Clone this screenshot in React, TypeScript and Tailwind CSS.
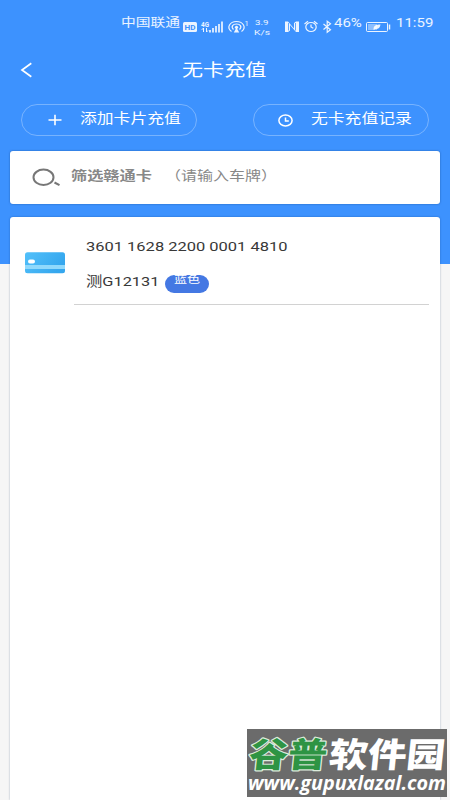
import React from "react";

const cards = [{ no: "3601 1628 2200 0001 4810", plate: "测G12131", color: "蓝色" }];

type WideProps = { box: string; className: string; children: React.ReactNode };

// 横向拉宽的文字，box 是实际占用的宽度
const Wide = ({ box, className, children }: WideProps) => (
  <span className={`block shrink-0 whitespace-nowrap ${box}`}>
    <span className={`inline-block origin-left align-top ${className}`}>{children}</span>
  </span>
);

const StatusBar = () => (
  <div className="flex h-[54px] items-center pl-[121px] text-white/90">
    <Wide box="w-[62px]" className="scale-x-[1.23] text-[12px] leading-4">中国联通</Wide>

    {/* HD / 4G / 信号 */}
    <svg className="w-[92px] shrink-0" height="24" viewBox="183 15 92 24" fill="none" stroke="currentColor">
      <rect x="183" y="22" width="14" height="10" rx="1.5" fill="currentColor" stroke="none" />
      <text x="184.5" y="30" fontSize="8" fontWeight="700" textLength="11" lengthAdjust="spacingAndGlyphs" fill="#3d92fe" stroke="none">HD</text>
      <text x="201" y="26.500" fontSize="6.500" fontWeight="700" textLength="8" lengthAdjust="spacingAndGlyphs" fill="currentColor" stroke="none">4G</text>
      <path d="M203.500 28v4M201.800 29.800l1.700-1.800M206.500 28v4l1.500-1.500" strokeWidth="1" />
      <path d="M210 30v2.500M213 28v4.500M216 26v6.500M219 24v8.500M222 21.500v11" strokeWidth="1.700" />
      <path d="M231.500 31.500c-5.500-4-1.500-10 5-10s10.500 6 5 10M233.500 29.500c-3-3-.5-5.500 3-5.500s6 2.500 3 5.500" strokeWidth="1.200" />
      <path d="M233.800 32.500l2.700-5 2.700 5z" fill="currentColor" stroke="none" />
      <circle cx="236.500" cy="27.300" r="1.600" fill="currentColor" stroke="none" />
      <text x="244.500" y="26" fontSize="7.500" fill="currentColor" stroke="none">1</text>
      <text x="255" y="25.300" fontSize="8" textLength="13.500" lengthAdjust="spacingAndGlyphs" fill="currentColor" stroke="none">3.9</text>
      <text x="254" y="34.500" fontSize="8" textLength="16" lengthAdjust="spacingAndGlyphs" fill="currentColor" stroke="none">K/s</text>
    </svg>

    {/* NFC / 闹钟 / 蓝牙 */}
    <svg className="ml-[9px] w-[50px] shrink-0" height="24" viewBox="284 15 50 24" fill="none" stroke="currentColor">
      <path d="M285 21.500h3l6 7v-5.500l2-1.500h3V32h-3l-6-7v5.500L288 32h-3z" fill="currentColor" stroke="none" />
      <path d="M288.500 23v7.500M295.500 23v7.500" stroke="#3d92fe" strokeWidth=".8" />
      <ellipse cx="311" cy="27" rx="5.200" ry="4.500" strokeWidth="1.200" />
      <path d="M311 24.500V27l2.300 1.300M304.500 24l3.500-2.700M317.500 24l-3.500-2.700" strokeWidth="1.200" />
      <path d="M323.500 24l7 5.700-3.300 2.600V21.300l3.300 2.500-7 5.700" strokeWidth="1.200" />
    </svg>
    <Wide box="w-[32px]" className="scale-x-[1.2] text-[12.5px] leading-4">46%</Wide>
    <svg className="w-[26px] shrink-0" height="24" viewBox="366 15 26 24" fill="none" stroke="currentColor">
      <rect x="366.500" y="22.500" width="21" height="9" rx="1" />
      <rect x="368" y="24" width="9" height="6" fill="currentColor" opacity=".45" stroke="none" />
      <path d="M373.500 29.500c0-4 2.500-5 7-5-.5 3.500-2.500 5-5.500 4.500l-1 1z" fill="currentColor" stroke="none" />
      <path d="M389.500 24.500v5" strokeWidth="1.500" />
    </svg>
    <Wide box="ml-[4px] w-[40px]" className="scale-x-[1.2] text-[12.5px] leading-4">11:59</Wide>
  </div>
);

const Header = () => (
  <header className="flex h-[32px] items-center pl-[20px] text-white">
    <svg className="shrink-0" width="13" height="16" viewBox="0 0 13 16" fill="none" stroke="currentColor" strokeWidth="1.7">
      <path d="M11.300 1.300L2 8l9.300 6.700" />
    </svg>
    <Wide box="ml-[149px] w-[86px]" className="scale-x-[1.24] text-[17px] leading-6">无卡充值</Wide>
  </header>
);

const Actions = () => (
  <div className="mt-[18px] flex justify-between pl-[21px] pr-[21px] text-white">
    <button className="flex h-[32px] w-[176px] items-center rounded-full border border-white/30 pl-[26px]">
      <svg className="shrink-0" width="14" height="12" viewBox="0 0 14 12" stroke="currentColor" strokeWidth="1.6">
        <path d="M.5 6h13M7 .8v10.400" />
      </svg>
      <Wide box="ml-[9px] w-[102px]" className="scale-x-[1.2] text-[14px] leading-5">添加卡片充值</Wide>
    </button>
    <button className="flex h-[32px] w-[176px] items-center rounded-full border border-white/30 pl-[24px]">
      <svg className="shrink-0" width="15" height="13" viewBox="0 0 15 13" fill="none" stroke="currentColor" strokeWidth="1.5">
        <ellipse cx="7.500" cy="6.500" rx="6.600" ry="5.400" />
        <path d="M7.500 3.500V7h3.300" />
      </svg>
      <Wide box="ml-[9px] w-[102px]" className="scale-x-[1.2] text-[14px] leading-5">无卡充值记录</Wide>
    </button>
  </div>
);

const SearchBox = () => (
  <div className="mx-[10px] mt-[15px] flex h-[53px] items-center rounded-[3px] bg-white pl-[22px] text-[#888] shadow-[0_0_2px_rgba(0,40,90,0.5)]">
    <svg className="shrink-0" width="30" height="20" viewBox="0 0 30 20" fill="none" stroke="#777">
      <ellipse cx="11.500" cy="9.300" rx="10" ry="7.700" strokeWidth="2" />
      <path d="M22.500 14.500l5 2.700" strokeWidth="2" />
    </svg>
    <Wide box="ml-[9px] w-[94px]" className="scale-x-[1.245] text-[13px] font-bold leading-5">筛选赣通卡</Wide>
    <Wide box="w-[113px]" className="scale-x-[1.23] text-[13px] leading-5">（请输入车牌）</Wide>
  </div>
);

const CardIcon = () => (
  <svg className="mt-[35px] shrink-0" width="40" height="22" viewBox="0 0 40 22">
    <defs>
      <linearGradient id="card" x1="0" y1="0" x2="1" y2="0.4">
        <stop offset="0" stopColor="#52c0fa" />
        <stop offset="1" stopColor="#35a7ee" />
      </linearGradient>
    </defs>
    <rect y=".3" width="40" height="21" rx="2.500" fill="url(#card)" />
    <rect y="13" width="40" height="4" fill="#90d9fc" />
    <rect x="3" y="7.500" width="7" height="4" rx="2" fill="#fff" />
  </svg>
);

export default function App() {
  return (
    <div className="flex h-[800px] w-[450px] flex-col overflow-hidden bg-[linear-gradient(#3d92fe_264px,#f6f6f6_264px)] font-[Roboto,'Noto_Sans_CJK_SC',sans-serif]">
      <StatusBar />
      <Header />
      <Actions />
      <SearchBox />

      <main className="mx-[10px] mt-[13px] flex-1 rounded-t-[3px] bg-white pl-[15px] pr-[11px] shadow-[0_0_2px_rgba(0,40,90,0.4)]">
        {cards.map((card) => (
          <div key={card.no} className="flex">
            <CardIcon />
            <div className="ml-[9px] h-[88px] flex-1 border-b border-[#d2d2d2] pl-[12px] pt-[19px] text-[#383838]">
              <Wide box="w-[202px]" className="scale-x-[1.22] text-[13.5px] leading-5">{card.no}</Wide>
              <div className="mt-[11px] flex items-center">
                <Wide box="w-[79px]" className="scale-x-[1.21] text-[13.5px] leading-5">{card.plate}</Wide>
                <span className="mt-[2px] flex h-[18px] w-[44px] items-center rounded-full bg-[#4478e3] pl-[9px] text-white">
                  <Wide box="w-[26px]" className="scale-x-[1.24] text-[10.5px] leading-4">{card.color}</Wide>
                </span>
              </div>
            </div>
          </div>
        ))}
      </main>

      {/* 水印 */}
      <div className="absolute left-[247px] top-[729px] h-[68px] w-[200px] overflow-hidden bg-[#6b6b6b]">
        <svg width="200" height="68" viewBox="0 0 200 68" fontFamily="'Noto Sans CJK SC', sans-serif" fontWeight="900">
          <g transform="skewX(-6)" fontSize="34" strokeLinejoin="round">
            <text x="5" y="38" textLength="78" lengthAdjust="spacingAndGlyphs" fill="#2e9444" stroke="#dcebdc" strokeWidth="2.400" paintOrder="stroke">谷普</text>
            <text x="85" y="38" textLength="116" lengthAdjust="spacingAndGlyphs" fill="#fff">软件园</text>
          </g>
          <text x="1" y="61" fontSize="19" fontFamily="'Open Sans', sans-serif" fontWeight="700" fontStyle="italic" textLength="198" lengthAdjust="spacingAndGlyphs" fill="#fff">www.gupuxlazal.com</text>
        </svg>
      </div>
    </div>
  );
}
